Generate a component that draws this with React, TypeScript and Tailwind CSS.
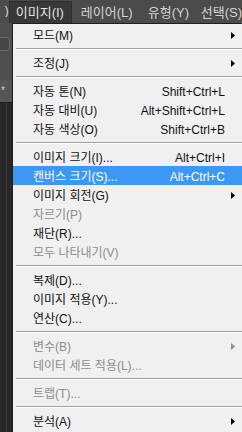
import type { ReactNode } from "react";

type Item =
  | { sep: true }
  | {
      sep?: false;
      label: string;
      shortcut?: string;
      sub?: boolean;
      disabled?: boolean;
      active?: boolean;
    };

const items: Item[] = [
  { label: "모드(M)", sub: true },
  { sep: true },
  { label: "조정(J)", sub: true },
  { sep: true },
  { label: "자동 톤(N)", shortcut: "Shift+Ctrl+L" },
  { label: "자동 대비(U)", shortcut: "Alt+Shift+Ctrl+L" },
  { label: "자동 색상(O)", shortcut: "Shift+Ctrl+B" },
  { sep: true },
  { label: "이미지 크기(I)...", shortcut: "Alt+Ctrl+I" },
  { label: "캔버스 크기(S)...", shortcut: "Alt+Ctrl+C", active: true },
  { label: "이미지 회전(G)", sub: true },
  { label: "자르기(P)", disabled: true },
  { label: "재단(R)..." },
  { label: "모두 나타내기(V)", disabled: true },
  { sep: true },
  { label: "복제(D)..." },
  { label: "이미지 적용(Y)..." },
  { label: "연산(C)..." },
  { sep: true },
  { label: "변수(B)", sub: true, disabled: true },
  { label: "데이터 세트 적용(L)...", disabled: true },
  { sep: true },
  { label: "트랩(T)...", disabled: true },
  { sep: true },
  { label: "분석(A)", sub: true },
];

function Arrow({ color }: { color: string }) {
  return (
    <svg width="4" height="7" viewBox="0 0 4 7" className="ml-auto mr-[7px] shrink-0">
      <path d="M0 0 L4 3.5 L0 7 Z" fill={color} />
    </svg>
  );
}

function Row({ children, active }: { children: ReactNode; active?: boolean }) {
  return (
    <div
      className={`flex h-[19px] items-center pl-[20px] pt-[2px] ${
        active ? "bg-[#3d98f4] text-white" : ""
      }`}
    >
      {children}
    </div>
  );
}

export default function App() {
  return (
    <div className="flex h-[432px] w-[242px] flex-col overflow-hidden bg-[#262626] font-['Liberation_Sans','Noto_Sans_CJK_KR',sans-serif] text-[12px] leading-none">
      {/* menu bar */}
      <div className="flex h-[23px] shrink-0 items-end bg-[#4b4b4b] text-[13px] text-[#d4d4d4]">
        <span className="mb-[6px] w-[13px] overflow-hidden text-right">)</span>
        <div className="flex h-[22px] w-[63px] shrink-0 items-center whitespace-nowrap border-x border-t border-[#2e2e2e] bg-[#383838] pl-[6px] text-[#e4e4e4]">
          이미지(I)
        </div>
        <div className="flex h-[22px] w-[69px] shrink-0 items-center whitespace-nowrap pl-[9px]">레이어(L)</div>
        <div className="flex h-[22px] w-[53px] shrink-0 items-center whitespace-nowrap pl-[7px]">유형(Y)</div>
        <div className="flex h-[22px] shrink-0 items-center whitespace-nowrap pl-[7px]">선택(S)</div>
      </div>

      <div className="flex min-h-0 flex-1">
        {/* panel strip on the left */}
        <div className="flex w-[12px] shrink-0 flex-col">
          <div className="flex h-[57px] flex-col bg-[#4f4f4f]">
            <div className="mt-[14px] h-[14px] w-[10px] rounded-r-[3px] border border-l-0 border-[#6a6a6a] bg-[#454545]" />
          </div>
          <div className="flex h-[22px] items-center bg-[#555555] pl-[1px] text-[10px] text-[#cfcfcf]">*</div>
          <div className="flex flex-1 border-t border-[#1c1c1c] bg-[#282828]">
            <div className="ml-[6px] w-px bg-[#3a3a3a]" />
          </div>
        </div>

        {/* dropdown */}
        <div className="min-w-0 flex-1 border-l border-t border-[#1f1f1f] bg-[#f0f0f0] pt-[1px] text-[#111]">
          {items.map((it, i) =>
            it.sep ? (
              <div key={i} className="flex h-[9px] items-center pl-[3px]">
                <div className="h-[2px] w-full border-t border-[#a0a0a0] bg-white" />
              </div>
            ) : (
              <Row key={i} active={it.active}>
                <span className={`whitespace-nowrap ${it.disabled ? "text-[#8c8c8c]" : ""}`}>
                  {it.label}
                </span>
                {it.shortcut && (
                  <span className="ml-auto mr-[17px] whitespace-nowrap">{it.shortcut}</span>
                )}
                {it.sub && <Arrow color={it.disabled ? "#8c8c8c" : "#000"} />}
              </Row>
            ),
          )}
        </div>
      </div>
    </div>
  );
}
